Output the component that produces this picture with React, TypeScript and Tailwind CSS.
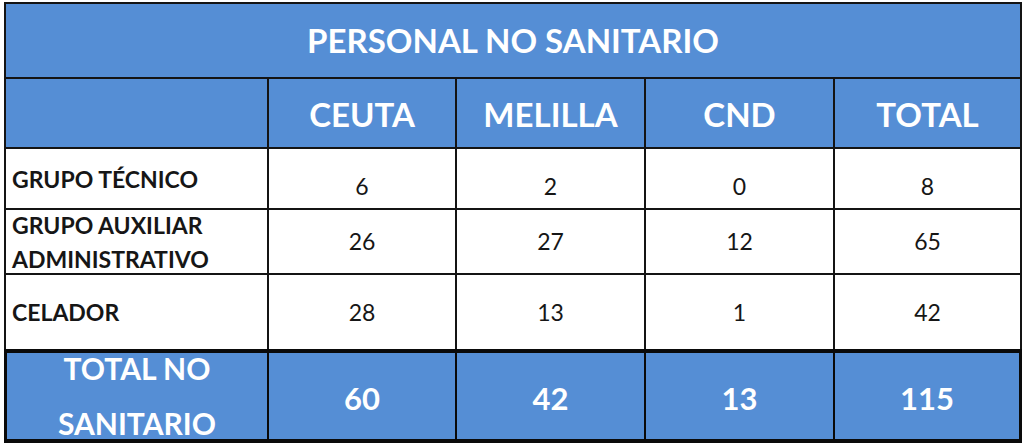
import React from "react";

const font = { fontFamily: "Lato, 'Open Sans', sans-serif" };

const rows = [
  { label: ["GRUPO TÉCNICO"], values: [6, 2, 0, 8], valueAlign: "items-end pb-[5px]" },
  { label: ["GRUPO AUXILIAR", "ADMINISTRATIVO"], values: [26, 27, 12, 65], valueAlign: "items-center" },
  { label: ["CELADOR"], values: [28, 13, 1, 42], valueAlign: "items-center" },
];

export default function App() {
  return (
    <div className="w-[1024px] h-[444px] bg-white pt-[2px] pl-[4px]" style={font}>
      <div className="w-[1018px] flex flex-col">
        {/* upper part */}
        <div className="grid grid-cols-[261px_186px_187px_187px_185px] grid-rows-[73px_68px_59px_63px_74px] gap-[2px] bg-[#141414] p-[2px] pb-0">
          <div className="col-span-5 bg-[#558ed5] flex items-center justify-center text-white font-bold text-[33px]">
            PERSONAL NO SANITARIO
          </div>
          <div className="bg-[#558ed5]" />
          {["CEUTA", "MELILLA", "CND", "TOTAL"].map((h) => (
            <div key={h} className="bg-[#558ed5] flex items-center justify-center pt-[4px] text-white font-bold text-[33px]">
              {h}
            </div>
          ))}
          {rows.map((r) => (
            <React.Fragment key={r.label[0]}>
              <div className="bg-white flex flex-col justify-center pl-[6px] text-[#161616] font-bold text-[23px] leading-[34px]">
                {r.label.map((l) => (
                  <span key={l}>{l}</span>
                ))}
              </div>
              {r.values.map((v, i) => (
                <div key={i} className={`bg-white flex justify-center ${r.valueAlign} text-[#161616] text-[23px]`}>
                  {v}
                </div>
              ))}
            </React.Fragment>
          ))}
        </div>
        {/* total row */}
        <div className="grid grid-cols-[260px_186px_187px_187px_184px] grid-rows-[86px] gap-[2px] bg-[#0a0a0a] px-[3px] pt-[4px] pb-[4px]">
          <div className="bg-[#558ed5] flex flex-col items-center justify-center text-white font-bold text-[30px] leading-[55px]">
            <span>TOTAL NO</span>
            <span>SANITARIO</span>
          </div>
          {[60, 42, 13, 115].map((v) => (
            <div key={v} className="bg-[#558ed5] flex items-center justify-center pt-[4px] text-white font-bold text-[31px]">
              {v}
            </div>
          ))}
        </div>
      </div>
    </div>
  );
}
